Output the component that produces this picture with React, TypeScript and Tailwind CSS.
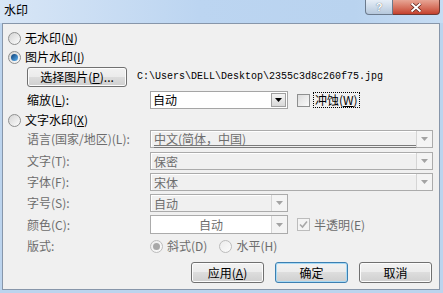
import type { ReactNode } from 'react';

function Radio({ checked = false, disabled = false }: { checked?: boolean; disabled?: boolean }) {
  return (
    <span
      className={`flex h-[13px] w-[13px] shrink-0 items-center justify-center rounded-full border ${
        disabled
          ? 'border-[#bcbcbc] bg-linear-to-br from-[#ececec] to-[#fbfbfb]'
          : 'border-[#8e8f8f] bg-linear-to-br from-[#d4d4d4] to-[#fdfdfd]'
      }`}
    >
      {checked && (
        <span
          className={`h-[7px] w-[7px] rounded-full ${
            disabled ? 'bg-[#a8a8a8]' : 'bg-linear-to-br from-[#0b3f75] to-[#5fb4f5]'
          }`}
        />
      )}
    </span>
  );
}

function Check({ checked = false, disabled = false }: { checked?: boolean; disabled?: boolean }) {
  return (
    <span
      className={`flex h-[13px] w-[13px] shrink-0 items-center justify-center border ${
        disabled ? 'border-[#bcbcbc] bg-[#f4f4f4]' : 'border-[#8e8f8f] bg-linear-to-br from-[#dcdcdc] to-[#fbfbfb]'
      }`}
    >
      {checked && (
        <svg width="9" height="9" viewBox="0 0 9 9">
          <path d="M1 4.5 L3.5 7 L8 1.5" fill="none" stroke={disabled ? '#a8a8a8' : '#2b2b2b'} strokeWidth="1.6" />
        </svg>
      )}
    </span>
  );
}

function Arrow({ dim = false }: { dim?: boolean }) {
  return (
    <svg width="7" height="4" viewBox="0 0 7 4">
      <path d="M0 0 H7 L3.5 4 Z" fill={dim ? '#a3a3a3' : '#000'} />
    </svg>
  );
}

function Btn({ children, def = false, className = '' }: { children: ReactNode; def?: boolean; className?: string }) {
  return (
    <button
      type="button"
      className={`flex items-center justify-center rounded-[3px] border text-[12px] text-black bg-[linear-gradient(#f2f2f2_0%,#ebebeb_50%,#dddddd_50%,#cfcfcf_100%)] ${
        def ? 'border-[#3c7fb1] shadow-[inset_0_0_0_1px_#a8daf5]' : 'border-[#707070] shadow-[inset_0_0_0_1px_#fcfcfc]'
      } ${className}`}
    >
      {children}
    </button>
  );
}

function DisSelect({ text, className = '', underline = false }: { text: string; className?: string; underline?: boolean }) {
  return (
    <div className={`flex h-[18px] border border-[#ababab] bg-[#f0f0f0] ${className}`}>
      <div className="flex flex-1 items-center border-t border-l border-white pl-[2px] text-[#6d6d6d]">
        <span className={`w-full leading-[13px] ${underline ? 'border-b-[3px] border-double border-[#7a7a7a]' : ''}`}>{text}</span>
      </div>
      <div className="flex w-[16px] items-center justify-center border-l border-[#d5d5d5] bg-[#f4f4f4]">
        <Arrow dim />
      </div>
    </div>
  );
}

function Label({ children, dim = false }: { children: ReactNode; dim?: boolean }) {
  return <span className={`w-[123px] shrink-0 ${dim ? 'text-[#6d6d6d]' : 'text-black'}`}>{children}</span>;
}

export default function App() {
  return (
    <div className="flex h-[293px] w-[443px] flex-col overflow-hidden bg-[#bcd4ee] font-['SimSun','Noto_Sans_CJK_SC',sans-serif] text-[12px]">
      <div className="flex h-[23px] shrink-0 items-start justify-between bg-[linear-gradient(90deg,#d8e6f6,#bcd5f1_45%,#b9d3ef_80%,#c6dcf3)]">
        <span className="pt-[3px] pl-[4px] leading-[14px] text-black">水印</span>
        <div className="mr-[3px] flex h-[15px]">
          <div className="flex w-[28px] items-center justify-center rounded-bl-[4px] border border-t-0 border-[#6b7a8c] bg-linear-to-b from-[#e6eef7] to-[#b6c8dc]">
            <span className="font-['Liberation_Sans',sans-serif] text-[11px] leading-[12px] font-bold text-white [text-shadow:0_0_1px_#3a4a5c]">
              ?
            </span>
          </div>
          <div className="flex w-[47px] items-center justify-center rounded-br-[4px] border border-t-0 border-l-0 border-[#6e3a34] bg-linear-to-b from-[#e7a595] to-[#c4402d]">
            <svg width="12" height="9" viewBox="0 0 12 9">
              <path d="M1.5 0.5 L10.5 8.5 M10.5 0.5 L1.5 8.5" stroke="#5a1f18" strokeWidth="3.4" />
              <path d="M1.5 0.5 L10.5 8.5 M10.5 0.5 L1.5 8.5" stroke="#fff" strokeWidth="2" />
            </svg>
          </div>
        </div>
      </div>

      <div className="mr-[3px] mb-[3px] ml-[2px] flex flex-1 flex-col border border-[#8796aa] bg-[#f0f0f0] pl-[5px] leading-[14px]">
        <div className="mt-[5px] flex h-[18px] items-center">
          <Radio />
          <span className="ml-[4px]">
            无水印(<u>N</u>)
          </span>
        </div>

        <div className="mt-[1px] flex h-[18px] items-center">
          <Radio checked />
          <span className="ml-[4px]">
            图片水印(<u>I</u>)
          </span>
        </div>

        <div className="mt-[1px] flex h-[20px] items-center">
          <Btn className="ml-[19px] h-[20px] w-[100px]">
            选择图片(<u>P</u>)...
          </Btn>
          <span className="ml-[10px] font-['Liberation_Mono',monospace] text-[10px] text-black">
            C:\Users\DELL\Desktop\2355c3d8c260f75.jpg
          </span>
        </div>

        <div className="mt-[4px] flex h-[18px] items-center pl-[19px]">
          <Label>
            缩放(<u>L</u>):
          </Label>
          <div className="flex h-[18px] w-[138px] border border-[#a5a5a5] bg-white">
            <span className="flex flex-1 items-center pl-[2px]">自动</span>
            <div className="m-[1px] flex w-[15px] items-center justify-center border border-[#a0a0a0] bg-linear-to-b from-[#f4f4f4] to-[#d9d9d9]">
              <Arrow />
            </div>
          </div>
          <span className="ml-[9px]">
            <Check />
          </span>
          <span className="ml-[3px] border border-dotted border-black px-[1px]">
            冲蚀(<u>W</u>)
          </span>
        </div>

        <div className="mt-[2px] flex h-[18px] items-center">
          <Radio />
          <span className="ml-[4px]">
            文字水印(<u>X</u>)
          </span>
        </div>

        <div className="mt-[1px] flex h-[18px] items-center pl-[19px]">
          <Label dim>语言(国家/地区)(L):</Label>
          <DisSelect text="中文(简体，中国)" className="w-[283px]" underline />
        </div>

        <div className="mt-[4px] flex h-[18px] items-center pl-[19px]">
          <Label dim>文字(T):</Label>
          <DisSelect text="保密" className="w-[283px]" />
        </div>

        <div className="mt-[3px] flex h-[18px] items-center pl-[19px]">
          <Label dim>字体(F):</Label>
          <DisSelect text="宋体" className="w-[283px]" />
        </div>

        <div className="mt-[3px] flex h-[18px] items-center pl-[19px]">
          <Label dim>字号(S):</Label>
          <DisSelect text="自动" className="w-[138px]" />
        </div>

        <div className="mt-[3px] flex h-[19px] items-center pl-[19px]">
          <Label dim>颜色(C):</Label>
          <div className="flex h-[19px] w-[138px] border border-[#ababab] bg-white">
            <span className="flex flex-1 items-center justify-center text-[#6d6d6d]">自动</span>
            <div className="flex w-[16px] items-center justify-center border-l border-[#d5d5d5] bg-[#f4f4f4]">
              <Arrow dim />
            </div>
          </div>
          <span className="ml-[9px]">
            <Check checked disabled />
          </span>
          <span className="ml-[4px] text-[#6d6d6d]">半透明(E)</span>
        </div>

        <div className="mt-[3px] flex h-[18px] items-center pl-[19px] text-[#6d6d6d]">
          <Label dim>版式:</Label>
          <Radio checked disabled />
          <span className="ml-[4px]">斜式(D)</span>
          <span className="ml-[12px]">
            <Radio disabled />
          </span>
          <span className="ml-[4px]">水平(H)</span>
        </div>

        <div className="mt-[7px] flex h-[21px] justify-end gap-[11px] pr-[7px]">
          <Btn className="h-[21px] w-[73px]">
            应用(<u>A</u>)
          </Btn>
          <Btn def className="h-[21px] w-[73px]">
            确定
          </Btn>
          <Btn className="h-[21px] w-[73px]">取消</Btn>
        </div>
      </div>
    </div>
  );
}
